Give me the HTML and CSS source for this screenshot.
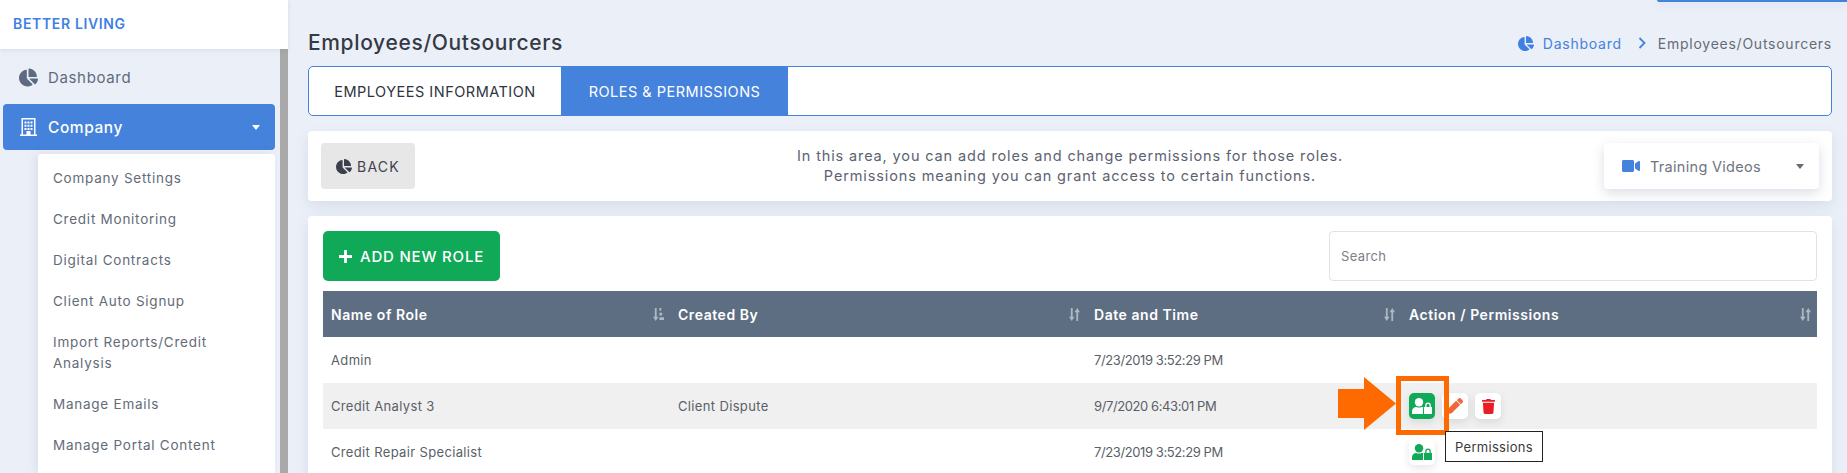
FILE: index.html
```html
<!DOCTYPE html>
<html lang="en">
<head>
<meta charset="utf-8">
<title>Employees/Outsourcers</title>
<link rel="stylesheet" href="styles.css">
</head>
<body>
<svg class="defs" width="0" height="0" aria-hidden="true">
  <symbol id="pie" viewBox="0 0 544 512"><path d="M527.79 288H290.5l158.03 158.03c6.04 6.04 15.98 6.53 22.19 .68 38.7-36.46 65.32-85.61 73.13-140.86 1.34-9.46-6.51-17.85-16.06-17.85zm-15.83-64.8C503.72 103.74 408.26 8.28 288.8 .04 279.68-.59 272 7.1 272 16.24V240h223.77c9.14 0 16.82-7.68 16.19-16.8zM224 288V50.71c0-9.55-8.39-17.4-17.84-16.06C86.99 51.49-4.1 155.6 .14 280.37 4.5 408.51 114.83 513.59 243.03 511.98c50.4-.63 96.97-16.87 135.26-44.03 7.9-5.6 8.42-17.23 1.57-24.08L224 288z"/></symbol>
  <symbol id="userlock" viewBox="0 0 20 16"><circle cx="7" cy="4.200" r="4.200"/><path d="M0 16v-2.800C0 10.800 2 9 4.300 9c1.800.8 3.600.8 5.400 0 .7 0 1.200.1 1.700.4-.3.500-.4 1-.4 1.600v5z"/><path fill-rule="evenodd" d="M12 9h1.200V7.200a2.800 2.800 0 0 1 5.600 0V9H20v7h-8zM14.500 9h3V7.200a1.500 1.500 0 0 0-3 0z"/></symbol>
  <symbol id="sort" viewBox="0 0 12 14"><path d="M2 0h2v9.500h2L3 14 0 9.500h2zM8 14h2V4.500h2L9 0 6 4.500h2z"/></symbol>
  <symbol id="sortasc" viewBox="0 0 12 14"><path d="M2 0h2v9.500h2L3 14 0 9.500h2zM7 0h2v3H7zM7 5h3v3H7zM7 10h5v3H7z"/></symbol>
</svg>

<div class="app">
  <aside class="sidebar">
    <div class="brand">BETTER LIVING</div>
    <div class="side-body">
      <nav class="nav">
        <a class="nav-item"><svg class="nav-icon"><use href="#pie"/></svg>Dashboard</a>
        <a class="nav-item active">
          <svg class="nav-icon" viewBox="0 0 17 18"><path fill-rule="evenodd" d="M1.500 0h14v16.500H17V18H0v-1.500h1.500zM3 1.500v15h3.500V13h4v3.500H14v-15zM4.500 3.500h2v2h-2zM7.500 3.500h2v2h-2zM10.500 3.500h2v2h-2zM4.500 6.800h2v2h-2zM7.500 6.800h2v2h-2zM10.500 6.800h2v2h-2zM4.500 10h2v2h-2zM7.500 10h2v2h-2zM10.500 10h2v2h-2z"/></svg>
          <span class="nav-label">Company</span><span class="caret"></span>
        </a>
        <ul class="submenu">
          <li>Company Settings</li>
          <li>Credit Monitoring</li>
          <li>Digital Contracts</li>
          <li>Client Auto Signup</li>
          <li>Import Reports/Credit Analysis</li>
          <li>Manage Emails</li>
          <li>Manage Portal Content</li>
        </ul>
      </nav>
      <div class="scrollbar"></div>
    </div>
  </aside>

  <main class="main">
    <div class="top-bar"></div>
    <header class="page-head">
      <h1>Employees/Outsourcers</h1>
      <div class="crumbs">
        <svg class="crumb-icon"><use href="#pie"/></svg>
        <a>Dashboard</a>
        <svg class="crumb-sep" viewBox="0 0 8 12"><path d="M1.500 1l5 5-5 5" fill="none" stroke="currentColor" stroke-width="1.800"/></svg>
        <span>Employees/Outsourcers</span>
      </div>
    </header>

    <div class="tabs">
      <a class="tab">EMPLOYEES INFORMATION</a>
      <a class="tab current">ROLES &amp; PERMISSIONS</a>
    </div>

    <section class="card info">
      <button class="back"><svg class="back-icon"><use href="#pie"/></svg>BACK</button>
      <p class="info-text">In this area, you can add roles and change permissions for those roles.<br>Permissions meaning you can grant access to certain functions.</p>
      <div class="videos">
        <svg class="video-icon" viewBox="0 0 576 512"><path d="M336.2 64H47.8C21.4 64 0 85.4 0 111.8v288.4C0 426.6 21.4 448 47.8 448h288.4c26.4 0 47.8-21.4 47.8-47.8V111.8c0-26.400-21.400-47.800-47.800-47.800zm189.400 37.700L416 177.300v157.400l109.600 75.500c21.200 14.600 50.400-.3 50.400-25.800V127.500c0-25.400-29.100-40.400-50.400-25.800z"/></svg>
        <span class="video-label">Training Videos</span><span class="caret dark"></span>
      </div>
    </section>

    <section class="card list">
      <div class="toolbar">
        <button class="add"><svg class="plus" viewBox="0 0 14 14"><path d="M5.500 0h3v5.500H14v3H8.500V14h-3V8.500H0v-3h5.500z"/></svg>ADD NEW ROLE</button>
        <input class="search" type="text" placeholder="Search">
      </div>
      <table class="roles">
        <colgroup><col class="c1"><col class="c2"><col class="c3"><col class="c4"></colgroup>
        <thead>
          <tr>
            <th><div class="th-in">Name of Role<svg class="sort"><use href="#sortasc"/></svg></div></th>
            <th><div class="th-in">Created By<svg class="sort"><use href="#sort"/></svg></div></th>
            <th><div class="th-in">Date and Time<svg class="sort"><use href="#sort"/></svg></div></th>
            <th><div class="th-in">Action / Permissions<svg class="sort"><use href="#sort"/></svg></div></th>
          </tr>
        </thead>
        <tbody>
          <tr><td>Admin</td><td></td><td class="date">7/23/2019 3:52:29 PM</td><td></td></tr>
          <tr class="alt">
            <td>Credit Analyst 3</td><td>Client Dispute</td><td class="date">9/7/2020 6:43:01 PM</td>
            <td><div class="actions">
              <button class="act perm on"><svg class="ic-lock"><use href="#userlock"/></svg></button>
              <button class="act"><svg class="ic-pencil" viewBox="0 0 512 512"><path d="M497.900 142.100l-46.100 46.100c-4.700 4.700-12.300 4.700-17 0l-111-111c-4.700-4.700-4.700-12.300 0-17l46.100-46.100c18.700-18.700 49.100-18.700 67.900 0l60.100 60.100c18.800 18.700 18.800 49.100 0 67.900zM284.200 99.800L21.600 362.400.4 483.900c-2.900 16.400 11.400 30.600 27.800 27.800l121.500-21.300 262.600-262.600c4.700-4.700 4.700-12.300 0-17l-111-111c-4.800-4.700-12.400-4.700-17.100 0z"/></svg></button>
              <button class="act"><svg class="ic-trash" viewBox="0 0 448 512"><path d="M432 32H312l-9.400-18.700A24 24 0 0 0 281.100 0H166.800a23.720 23.720 0 0 0-21.400 13.300L136 32H16A16 16 0 0 0 0 48v32a16 16 0 0 0 16 16h416a16 16 0 0 0 16-16V48a16 16 0 0 0-16-16zM53.200 467a48 48 0 0 0 47.900 45h245.800a48 48 0 0 0 47.900-45L416 128H32z"/></svg></button>
              <div class="tooltip">Permissions</div>
              <div class="focus-box"></div>
              <svg class="arrow" viewBox="0 0 58 53"><path d="M0 12h26V0l32 26.500L26 53V41H0z"/></svg>
            </div></td>
          </tr>
          <tr>
            <td>Credit Repair Specialist</td><td></td><td class="date">7/23/2019 3:52:29 PM</td>
            <td><div class="actions"><button class="act perm"><svg class="ic-lock"><use href="#userlock"/></svg></button></div></td>
          </tr>
        </tbody>
      </table>
    </section>
  </main>
</div>
</body>
</html>
```
FILE: styles.css
```css
* { box-sizing: border-box; }
html, body { margin: 0; height: 473px; overflow: hidden; }
body { background: #ebf0f8; font-family: Inter, "Open Sans", sans-serif; color: #3a3f4a; }
.defs { position: absolute; }
button { font-family: inherit; border: 0; padding: 0; cursor: pointer; }

.app { display: flex; height: 473px; overflow: hidden; }

/* sidebar */
.sidebar { width: 288px; flex: none; display: flex; flex-direction: column; }
.brand { height: 49px; flex: none; background: #fff; padding: 15px 0 0 13px; color: #3f80e4; font-size: 14px; line-height: 17px; font-weight: 600; letter-spacing: .65px; box-shadow: 0 1px 5px rgba(60,70,100,.12); position: relative; z-index: 2; }
.side-body { flex: 1; display: flex; min-height: 0; }
.nav { width: 280px; padding: 0 5px 0 3px; display: flex; flex-direction: column; }
.nav-item { display: flex; align-items: center; font-size: 15px; letter-spacing: .65px; color: #5f6b7e; }
.nav-item:first-child { height: 55px; padding: 2px 0 0 16px; }
.nav-icon { width: 19px; height: 19px; fill: #5c6b80; margin-right: 10px; flex: none; }
.nav-item.active { height: 46px; background: #4582dc; color: #fff; border-radius: 4px; padding: 0 15px 0 17px; font-weight: 500; font-size: 15.500px; letter-spacing: .55px; }
.nav-item.active .nav-icon { fill: #fff; width: 17px; height: 18px; margin-right: 11px; }
.nav-label { flex: 1; }
.caret { width: 0; height: 0; border-left: 4.500px solid transparent; border-right: 4.500px solid transparent; border-top: 5px solid #fff; }
.caret.dark { border-top-color: #6a6a6a; border-left-width: 4px; border-right-width: 4px; }
.submenu { list-style: none; margin: 4px 0 0 35px; padding: 4px 0 0; background: #fff; border-radius: 3px 3px 0 0; flex: 1; box-shadow: -3px 0 10px rgba(90,110,150,.12); }
.submenu li { padding: 10px 25px 10px 15px; font-size: 13.500px; line-height: 21px; color: #636b78; letter-spacing: .75px; }
.scrollbar { width: 8px; background: #a9a9a9; }

/* main */
.main { flex: 1; min-width: 0; padding: 0 15px 0 20px; position: relative; }
.top-bar { position: absolute; top: 0; right: 0; width: 190px; height: 2px; background: #4582dc; box-shadow: 0 2px 10px rgba(80,100,150,.25); border-radius: 0 0 0 3px; }
.page-head { height: 66px; padding-top: 30px; display: flex; justify-content: space-between; align-items: flex-start; }
h1 { margin: 0; font-size: 21px; line-height: 26px; font-weight: 500; color: #343a46; letter-spacing: .65px; }
.crumbs { display: flex; align-items: center; height: 26px; font-size: 14px; color: #666c76; letter-spacing: .75px; }
.crumb-icon { width: 16px; height: 15px; fill: #3f80e4; margin-right: 9px; }
.crumbs a { color: #4582dc; }
.crumb-sep { width: 8px; height: 12px; margin: 0 12px 0 16px; color: #4582dc; }

.tabs { height: 50px; display: flex; background: #fff; border: 1px solid #4582dc; border-radius: 5px; overflow: hidden; }
.tab { display: flex; align-items: center; justify-content: center; font-size: 14.500px; letter-spacing: .5px; color: #2f3340; }
.tab:first-child { width: 252px; }
.tab.current { width: 227px; background: #4582dc; color: #fff; }

.card { background: #fff; border-radius: 4px; box-shadow: 0 5px 14px rgba(90,110,150,.14); }
.info { height: 70px; margin-top: 15px; padding: 12px 13px; display: grid; grid-template-columns: 1fr auto 1fr; align-items: center; }
.back { width: 94px; height: 46px; background: #e7e7e7; border-radius: 4px; display: flex; align-items: center; justify-content: center; font-size: 14px; color: #3e4450; letter-spacing: 1.2px; }
.back-icon { width: 16px; height: 15px; fill: #3a404c; margin-right: 5px; }
.info-text { margin: 0; font-size: 14.500px; line-height: 20px; text-align: center; color: #5c6370; letter-spacing: .87px; }
.videos { justify-self: end; width: 215px; height: 46px; border-radius: 4px; background: #fff; box-shadow: 0 4px 12px rgba(70,85,120,.2); display: flex; align-items: center; padding: 0 15px 0 18px; font-size: 14.500px; color: #6f7580; letter-spacing: .3px; }
.video-icon { width: 18px; height: 16px; fill: #4582dc; margin-right: 10px; }
.video-label { flex: 1; }

.list { margin-top: 15px; height: 300px; padding: 15px; }
.toolbar { display: flex; justify-content: space-between; height: 50px; margin-bottom: 10px; }
.add { width: 177px; height: 50px; background: #10a957; color: #fff; border-radius: 5px; font-size: 15px; font-weight: 500; letter-spacing: .8px; display: flex; align-items: center; justify-content: center; }
.plus { width: 13px; height: 13px; fill: #fff; margin-right: 8px; }
.search { width: 488px; height: 50px; border: 1px solid #e2e2e2; border-radius: 4px; padding: 0 11px; font: 13px Inter, sans-serif; letter-spacing: .35px; outline: 0; }
.search::placeholder { color: #7b7f86; }

.roles { width: 1494px; table-layout: fixed; border-collapse: collapse; font-size: 13px; color: #5a5f68; letter-spacing: .35px; }
.c1 { width: 347px; } .c2 { width: 416px; } .c3 { width: 315px; } .c4 { width: 416px; }
th { height: 46px; background: #5d6d82; color: #fff; font-size: 14px; font-weight: 600; text-align: left; padding: 0 6px 0 8px; letter-spacing: .55px; }
.th-in { display: flex; justify-content: space-between; align-items: center; }
.sort { width: 11px; height: 13px; fill: #aeb8c4; }
td { height: 46px; padding: 0 8px; vertical-align: middle; }
td.date { letter-spacing: -.4px; }
.alt td { background: #f0f0f0; }

.actions { display: flex; gap: 7px; position: relative; }
.act { width: 26px; height: 26px; background: #fff; border-radius: 5px; box-shadow: 0 3px 8px rgba(0,0,0,.1); display: flex; align-items: center; justify-content: center; }
.perm svg { width: 20px; height: 16px; fill: #10a957; }
.perm.on { background: #10a957; }
.perm.on svg { fill: #fff; }
.ic-pencil { width: 16px; height: 16px; fill: #f2673a; }
.ic-trash { width: 13px; height: 15px; fill: #ec1c24; }

.tooltip { position: absolute; left: 36px; top: 38px; width: 98px; height: 31px; background: #fff; border: 1px solid #222; font-size: 13px; line-height: 30px; padding-left: 9px; color: #3a3a3a; letter-spacing: .3px; z-index: 3; white-space: nowrap; }
.focus-box { position: absolute; left: -13px; top: -17px; width: 53px; height: 59px; border: 5px solid #ff6a00; z-index: 2; pointer-events: none; }
.arrow { position: absolute; left: -71px; top: -16px; width: 58px; height: 53px; fill: #ff6a00; }
```
